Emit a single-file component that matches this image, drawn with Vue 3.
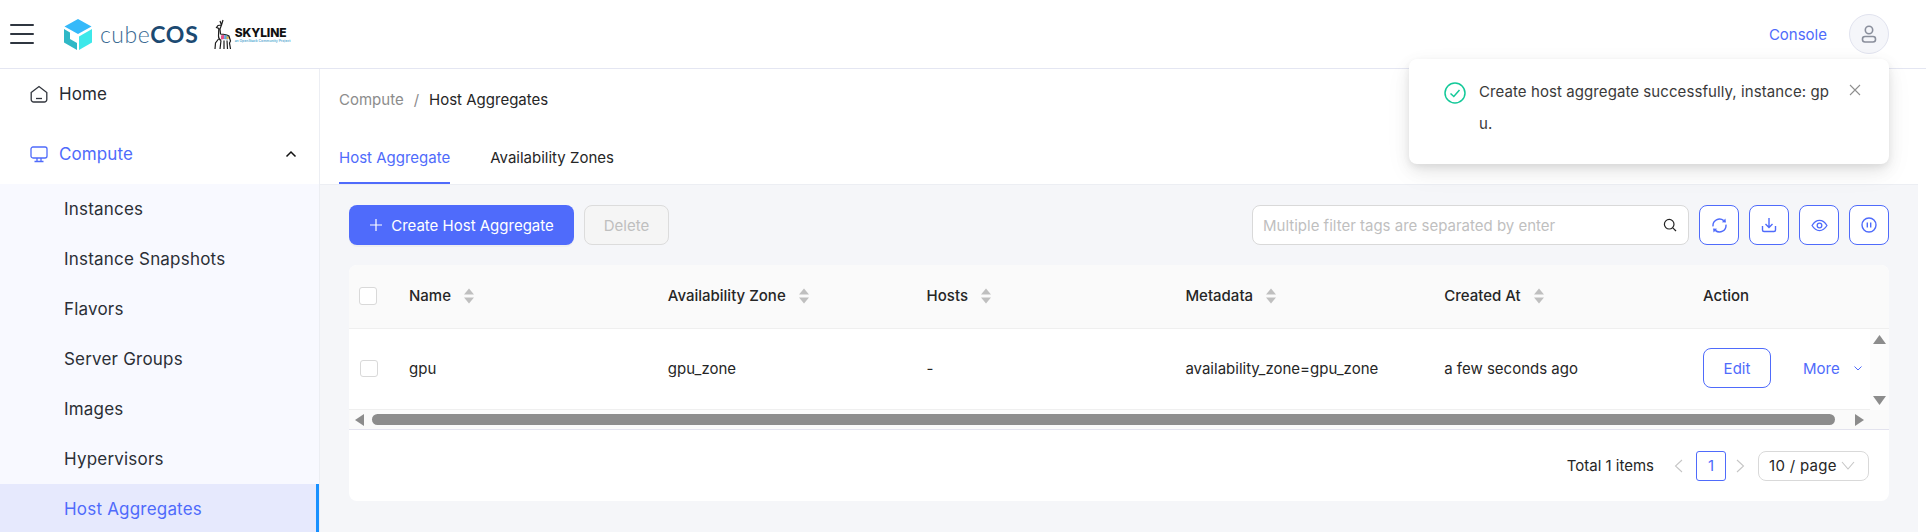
<script setup>
const subItems = ['Instances', 'Instance Snapshots', 'Flavors', 'Server Groups', 'Images', 'Hypervisors']
const columns = [
  { label: 'Name', value: 'gpu', sort: true },
  { label: 'Availability Zone', value: 'gpu_zone', sort: true },
  { label: 'Hosts', value: '-', sort: true },
  { label: 'Metadata', value: 'availability_zone=gpu_zone', sort: true },
  { label: 'Created At', value: 'a few seconds ago', sort: true },
]
</script>

<template>
  <div class="app">
    <header class="topbar">
      <button class="burger" aria-label="menu"><i></i><i></i><i></i></button>
      <svg class="cube" viewBox="0 0 28 31" width="28" height="31">
        <path d="M14 0 L27.500 7.500 L14 15 L0.500 7.500Z" fill="#35b9fa" />
        <path d="M0 10 L6 13.500 V20 L13 24 V31 L0 23.500Z" fill="#2fb8c6" />
        <path d="M28 10 V23.500 L15 31 V17.500Z" fill="#3de8ea" />
      </svg>
      <div class="brand"><span class="cube-word">cube</span><span class="cos-word">COS</span></div>
      <svg class="deer" viewBox="0 0 20 31" width="20" height="31">
        <path d="M8 16 L13 15 L17 17 L16.500 21 L12 21.500 L8.500 20.500Z" fill="#f4f4f4" />
        <path d="M9 16.500 L12.500 15.500 L12 20 L9 20.500Z" fill="#e2518a" />
        <path d="M12.500 15.500 L16.500 17 L16 20.500 L12 20Z" fill="#5aa6e0" />
        <path d="M14.500 17 L16.800 18 L16.500 20 L14.500 20Z" fill="#e9b33c" />
        <path d="M11 1 L9.500 6 M8 2 L9.500 6 L8 10 M9.500 6 L6 6.500 L4.500 8.500 L6.800 9.500 L6.500 17 C6.500 20 8 21 9 21.500 M8 10 L8.500 15 C12 15.500 15 15 17 17 L18.500 22 L17.500 24 L18.500 30 M9 21.500 L8 30 M6.500 20 L3.500 24 L3 30 M12 21.500 L12 30 M15 21.500 L15.500 30" fill="none" stroke="#1c1c1c" stroke-width="1.200" />
      </svg>
      <div class="skyline"><strong>SKYLINE</strong><span>an OpenStack Community Project</span></div>
      <div class="spacer"></div>
      <a class="console">Console</a>
      <div class="avatar">
        <svg viewBox="0 0 16 18" width="16" height="18" fill="none" stroke="#8a8f9c" stroke-width="1.600">
          <circle cx="8" cy="5" r="3.700" />
          <rect x="1.500" y="11.500" width="13" height="5.500" rx="2.500" />
        </svg>
      </div>
    </header>

    <div class="body">
      <aside class="sidebar">
        <div class="menu-item">
          <svg viewBox="0 0 18 18" width="18" height="18" fill="none" stroke="#30343c" stroke-width="1.300">
            <path d="M1.200 7.500 L9 1.500 L16.800 7.500 V14.500 A2.500 2.500 0 0 1 14.300 17 H3.700 A2.500 2.500 0 0 1 1.200 14.500Z" />
            <path d="M6 13.500 H12" />
          </svg>
          <span>Home</span>
        </div>
        <div class="menu-item active">
          <svg viewBox="0 0 18 18" width="18" height="18" fill="none" stroke="#4f6bfb" stroke-width="1.300">
            <rect x="1" y="2" width="16" height="11" rx="2" />
            <path d="M7 13 V16 M11 13 V16 M4.500 16.500 H13.500" />
          </svg>
          <span>Compute</span>
          <svg class="caret" viewBox="0 0 12 8" width="12" height="8" fill="none" stroke="#111" stroke-width="1.500">
            <path d="M1.500 6.500 L6 2 L10.500 6.500" />
          </svg>
        </div>
        <ul class="submenu">
          <li v-for="item in subItems" :key="item">{{ item }}</li>
          <li class="selected">Host Aggregates</li>
        </ul>
      </aside>

      <main class="main">
        <div class="page-head">
          <div class="crumbs"><span class="crumb-muted">Compute</span><span class="crumb-sep">/</span><span>Host Aggregates</span></div>
          <div class="tabs">
            <span class="tab current">Host Aggregate</span>
            <span class="tab">Availability Zones</span>
          </div>
        </div>

        <div class="content">
          <div class="toolbar">
            <button class="btn-primary">
              <svg viewBox="0 0 14 14" width="14" height="14" fill="none" stroke="#fff" stroke-width="1.200"><path d="M7 1 V13 M1 7 H13" /></svg>
              Create Host Aggregate
            </button>
            <button class="btn-disabled">Delete</button>
            <div class="spacer"></div>
            <div class="search">
              <span class="placeholder">Multiple filter tags are separated by enter</span>
              <svg viewBox="0 0 14 14" width="14" height="14" fill="none" stroke="#222" stroke-width="1.200">
                <circle cx="6.200" cy="6.200" r="4.800" /><path d="M9.800 9.800 L13 13" />
              </svg>
            </div>
            <button class="icon-btn">
              <svg viewBox="0 0 18 18" width="17" height="17" fill="none" stroke="#4f6bfb" stroke-width="1.500">
                <path d="M2.200 10 A6.900 6.900 0 0 1 13.500 3.800" />
                <path d="M15.800 8 A6.900 6.900 0 0 1 4.500 14.200" />
                <path d="M11.500 5.500 L15.800 5.800 L15.300 1.500Z" fill="#4f6bfb" stroke="none" />
                <path d="M6.500 12.500 L2.200 12.200 L2.700 16.500Z" fill="#4f6bfb" stroke="none" />
              </svg>
            </button>
            <button class="icon-btn">
              <svg viewBox="0 0 16 16" width="16" height="16" fill="none" stroke="#4f6bfb" stroke-width="1.400">
                <path d="M8 1 V10 M4.500 7 L8 10.500 L11.500 7" /><path d="M1.500 9 V13 A1.500 1.500 0 0 0 3 14.500 H13 A1.500 1.500 0 0 0 14.500 13 V9" />
              </svg>
            </button>
            <button class="icon-btn">
              <svg viewBox="0 0 18 14" width="17" height="13" fill="none" stroke="#4f6bfb" stroke-width="1.400">
                <path d="M1 7 C4 2 6.500 1.500 9 1.500 C11.500 1.500 14 2 17 7 C14 12 11.500 12.500 9 12.500 C6.500 12.500 4 12 1 7Z" /><circle cx="9" cy="7" r="2.500" />
              </svg>
            </button>
            <button class="icon-btn">
              <svg viewBox="0 0 16 16" width="16" height="16" fill="none" stroke="#4f6bfb" stroke-width="1.400">
                <circle cx="8" cy="8" r="7" /><path d="M6.300 5.500 V10.500 M9.700 5.500 V10.500" />
              </svg>
            </button>
          </div>

          <section class="card">
            <div class="table-row head">
              <div class="cell-check"><span class="check"></span></div>
              <div v-for="col in columns" :key="col.label" class="cell">
                {{ col.label }}
                <svg class="sort" viewBox="0 0 10 16" width="10" height="16" fill="#bfbfbf">
                  <path d="M5 0.500 L10 6.500 H0Z" /><path d="M5 15.500 L10 9.500 H0Z" />
                </svg>
              </div>
              <div class="cell">Action</div>
            </div>

            <div class="data-wrap">
              <div class="table-row data">
                <div class="cell-check"><span class="check small"></span></div>
                <div v-for="col in columns" :key="col.label" class="cell">{{ col.value }}</div>
                <div class="cell actions">
                  <button class="btn-edit">Edit</button>
                  <span class="more">More
                    <svg viewBox="0 0 8 5" width="8" height="5" fill="none" stroke="#4f6bfb" stroke-width="1"><path d="M0.500 0.500 L4 4 L7.500 0.500" /></svg>
                  </span>
                </div>
              </div>
              <div class="vbar">
                <svg viewBox="0 0 13 9" width="13" height="9" fill="#8c8c8c"><path d="M6.500 0 L13 9 H0Z" /></svg>
                <svg viewBox="0 0 13 9" width="13" height="9" fill="#8c8c8c"><path d="M0 0 H13 L6.500 9Z" /></svg>
              </div>
            </div>

            <div class="hbar">
              <svg viewBox="0 0 9 12" width="9" height="12" fill="#8c8c8c"><path d="M0 6 L9 0 V12Z" /></svg>
              <div class="thumb"></div>
              <svg viewBox="0 0 9 12" width="9" height="12" fill="#8c8c8c"><path d="M0 0 L9 6 L0 12Z" /></svg>
            </div>

            <div class="pager">
              <span class="total">Total 1 items</span>
              <svg viewBox="0 0 9 14" width="9" height="14" fill="none" stroke="#c6c6c6" stroke-width="1.100"><path d="M8 1 L1.500 7 L8 13" /></svg>
              <span class="page-num">1</span>
              <svg viewBox="0 0 9 14" width="9" height="14" fill="none" stroke="#c6c6c6" stroke-width="1.100"><path d="M1 1 L7.500 7 L1 13" /></svg>
              <div class="page-size"><span class="size-text">10 / page</span>
                <svg viewBox="0 0 14 9" width="14" height="9" fill="none" stroke="#c6c6c6" stroke-width="1.100"><path d="M1 1 L7 8 L13 1" /></svg>
              </div>
            </div>
          </section>
        </div>
      </main>
      <div class="page-gutter"></div>
    </div>

    <div class="toast">
      <svg class="toast-icon" viewBox="0 0 22 22" width="22" height="22" fill="none" stroke="#13c999" stroke-width="1.500">
        <circle cx="11" cy="11" r="10" /><path d="M6.500 11.500 L9.800 14.500 L15.500 8" />
      </svg>
      <p>Create host aggregate successfully, instance: gp<br />u.</p>
      <svg class="toast-close" viewBox="0 0 12 12" width="12" height="12" fill="none" stroke="#8f8f8f" stroke-width="1.100"><path d="M1 1 L11 11 M11 1 L1 11" /></svg>
    </div>
  </div>
</template>

<style>
html, body { margin: 0; height: 100%; overflow: hidden; background: #fff; }
</style>

<style scoped>
* { box-sizing: border-box; }
.app { position: relative; width: 1926px; height: 532px; overflow: hidden; font-family: Inter, "Liberation Sans", sans-serif; font-size: 15px; color: #262626; background: #fff; }
button { font-family: inherit; padding: 0; cursor: pointer; }
.spacer { flex: 1; }

.topbar { height: 69px; display: flex; align-items: center; padding-right: 37px; border-bottom: 1px solid #e4e6f2; box-shadow: 0 1px 2px rgba(0,0,0,.02); }
.burger { width: 24px; margin-left: 10px; margin-right: 30px; display: flex; flex-direction: column; gap: 7px; background: none; border: 0; }
.burger i { display: block; height: 2px; background: #2f3640; border-radius: 1px; }
.cube { margin-top: 1px; }
.brand { margin-left: 8px; font-size: 23px; line-height: 30px; color: #3a6a92; font-family: Lato, Inter, sans-serif; }
.cube-word { font-weight: 300; letter-spacing: .5px; }
.cos-word { font-weight: 700; letter-spacing: .8px; color: #1c4a72; }
.deer { margin-left: 13px; }
.skyline { margin-left: 3px; margin-top: 2px; display: flex; flex-direction: column; line-height: 1; }
.skyline strong { font-size: 12px; line-height: 12px; font-weight: 800; color: #111; letter-spacing: -.1px; }
.skyline span { font-size: 3.400px; line-height: 5px; color: #6fb5d8; font-weight: 700; white-space: nowrap; }
.console { color: #4f6bfb; margin-right: 22px; }
.avatar { width: 40px; height: 40px; border-radius: 50%; background: #f5f6fa; border: 1px solid #e1e3ef; display: flex; align-items: center; justify-content: center; }

.body { display: flex; height: 463px; }
.sidebar { width: 320px; flex: none; border-right: 1px solid #eceef3; background: #fff; }
.menu-item { height: 50px; display: flex; align-items: center; padding: 0 30px; font-size: 17px; letter-spacing: .1px; color: #262b33; gap: 11px; }
.menu-item.active { color: #4f6bfb; margin-top: 10px; }
.menu-item svg { flex: none; }
.caret { margin-left: auto; margin-right: -8px; }
.submenu { list-style: none; margin: 5px 0 0; padding: 0; background: #f8f9ff; font-size: 17px; letter-spacing: .2px; }
.submenu li { height: 50px; line-height: 50px; padding-left: 64px; color: #2b2f36; }
.submenu li.selected { background: #e6e9fd; color: #4f6bfb; border-right: 3px solid #1890ff; }

.main { flex: 1; display: flex; flex-direction: column; background: #f5f6f9; min-width: 0; }
.page-gutter { width: 8px; flex: none; background: #fff; }
.page-head { background: #fff; height: 116px; padding-left: 19px; border-bottom: 1px solid #eceef3; display: flex; flex-direction: column; }
.crumbs { height: 63px; padding-top: 21px; line-height: 20px; display: flex; gap: 10px; }
.crumb-muted, .crumb-sep { color: #8c8c8c; }
.tabs { display: flex; gap: 40px; }
.tab { height: 53px; line-height: 54px; }
.tab.current { color: #4f6bfb; border-bottom: 2px solid #4f6bfb; }

.content { flex: 1; padding: 20px 29px 0 29px; }
.toolbar { display: flex; align-items: center; height: 40px; gap: 10px; }
.btn-primary { width: 225px; height: 40px; background: #4f6bfb; color: #fff; border: 0; border-radius: 8px; font-size: 15px; display: flex; align-items: center; justify-content: center; gap: 8px; box-shadow: 0 2px 0 rgba(0,0,0,.03); }
.btn-disabled { width: 85px; height: 40px; background: #f5f5f5; color: #bfbfbf; border: 1px solid #dcdcdc; border-radius: 8px; font-size: 15px; }
.search { width: 437px; height: 40px; background: #fff; border: 1px solid #d9d9d9; border-radius: 8px; display: flex; align-items: center; justify-content: space-between; padding: 0 11px 0 10px; }
.placeholder { color: #bfbfbf; }
.icon-btn { width: 40px; height: 40px; background: #fff; border: 1px solid #4f6bfb; border-radius: 8px; display: flex; align-items: center; justify-content: center; }

.card { margin-top: 20px; width: 1540px; background: #fff; border-radius: 8px; overflow: hidden; }
.table-row { display: grid; grid-template-columns: 44px repeat(6, 258.800px); align-items: center; }
.table-row.head { height: 64px; background: #fafafa; border-bottom: 1px solid #efefef; font-weight: 500; color: #262626; padding-bottom: 2px; }
.table-row.data { height: 81px; flex: none; width: 1521px; grid-template-columns: 44px repeat(5, 258.800px) 183px; border-bottom: 1px solid #efefef; padding-bottom: 2px; }
.cell { padding-left: 16px; display: flex; align-items: center; gap: 0; white-space: pre; }
.cell-check { padding-left: 10px; display: flex; }
.check { width: 18px; height: 18px; border: 1px solid #d9d9d9; border-radius: 3px; background: #fff; }
.check.small { margin-left: 1px; height: 17px; }
.sort { margin-left: 9px; }
.data-wrap { display: flex; height: 81px; }
.vbar { flex: 1; background: #fcfcfc; display: flex; flex-direction: column; align-items: center; justify-content: space-between; padding: 6px 0 5px; }
.actions { gap: 32px; }
.btn-edit { width: 68px; height: 40px; background: #fff; border: 1px solid #4f6bfb; color: #4f6bfb; border-radius: 8px; font-size: 15px; }
.more { color: #4f6bfb; display: flex; align-items: center; gap: 10px; }
.hbar { height: 20px; display: flex; align-items: center; background: #fafafa; border-bottom: 1px solid #e3e3ee; padding: 0 6px; }
.thumb { flex: none; width: 1463px; height: 11px; background: #8c8c8c; border-radius: 6px; margin: 0 20px 0 8px; }
.pager { height: 71px; display: flex; align-items: center; justify-content: flex-end; padding-right: 20px; }
.total { margin-right: 20px; }
.page-num { width: 30px; height: 30px; margin: 0 10px 0 13px; border: 1px solid #4f6bfb; border-radius: 3px; color: #4f6bfb; display: flex; align-items: center; justify-content: center; }
.page-size { margin-left: 13px; width: 111px; height: 30px; border: 1px solid #d9d9d9; border-radius: 8px; display: flex; align-items: center; padding-left: 10px; gap: 4px; }
.size-text { letter-spacing: .3px; }

.toast { position: absolute; left: 1409px; top: 59px; width: 480px; height: 105px; background: #fff; border-radius: 8px; box-shadow: 0 6px 16px rgba(0,0,0,.08), 0 3px 6px rgba(0,0,0,.06), 0 9px 28px rgba(0,0,0,.05); display: flex; }
.toast p { margin: 17px 0 0 13px; width: 370px; font-size: 15px; letter-spacing: .08px; line-height: 32px; color: #3a3a3a; flex: none; }
.toast-icon { margin: 23px 0 0 35px; flex: none; }
.toast-close { margin: 25px 0 0 0; flex: none; }
</style>
